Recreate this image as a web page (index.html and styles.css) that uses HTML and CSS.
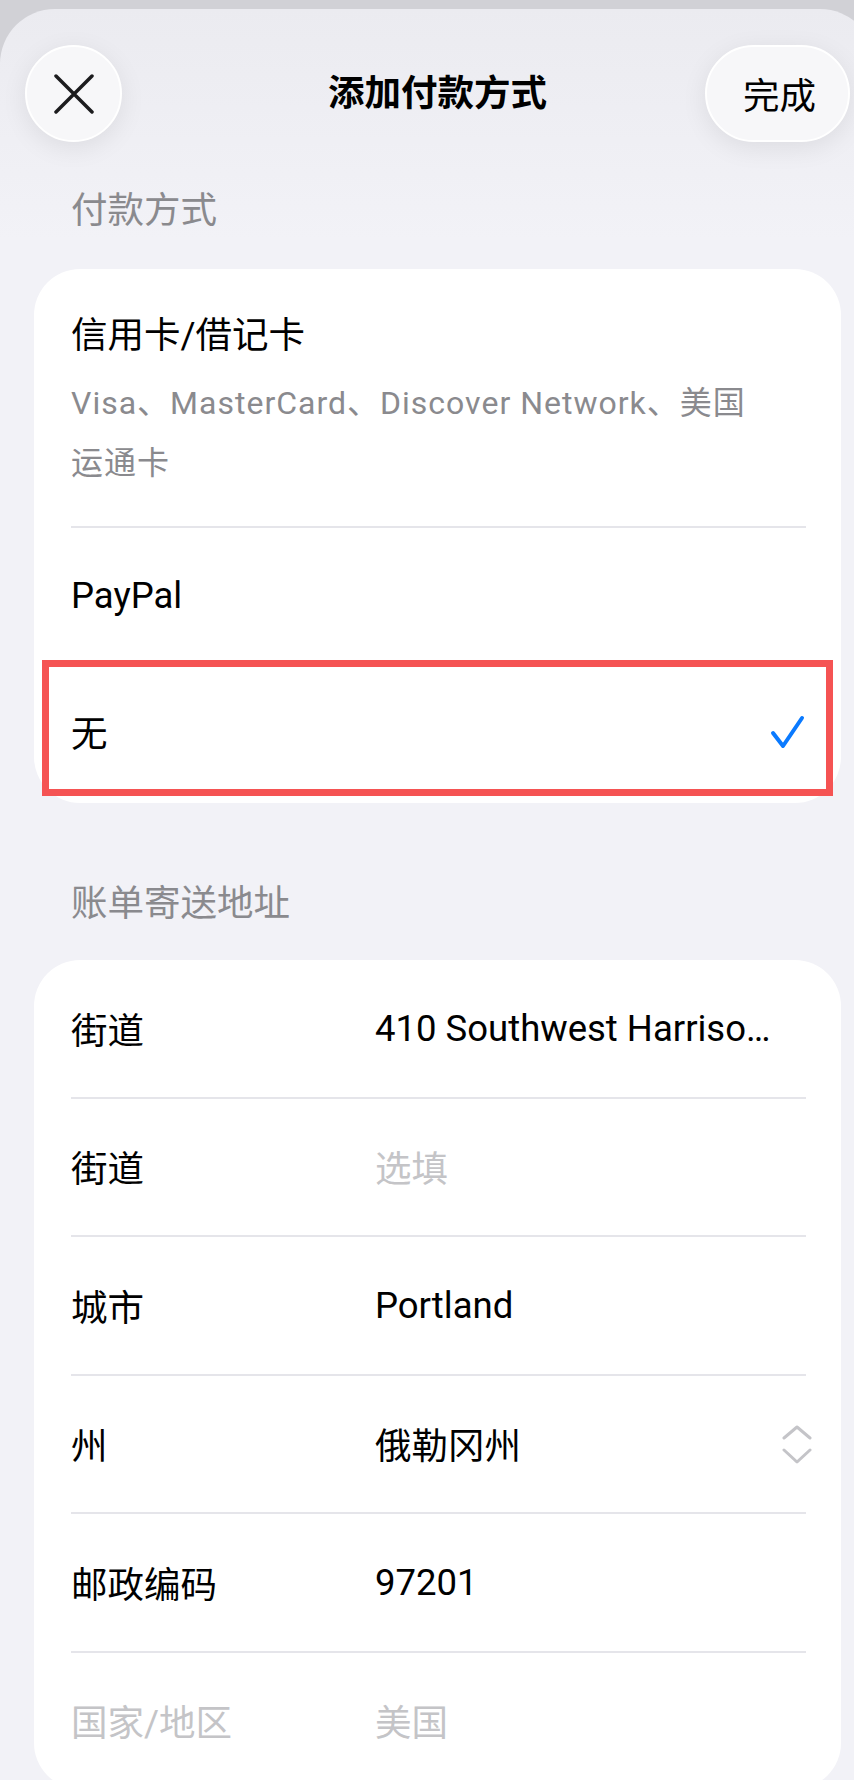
FILE: index.html
```html
<!DOCTYPE html>
<html lang="zh-CN">
<head>
<meta charset="utf-8">
<meta name="viewport" content="width=device-width, initial-scale=1.0">
<title>添加付款方式</title>
<link rel="stylesheet" href="styles.css">
</head>
<body>
<div class="screen">
	<div class="status-mark"></div>
	<div class="sheet">
		<div class="nav">
			<button class="circle-btn" aria-label="关闭">
				<svg width="40" height="40" viewBox="0 0 40 40"><path d="M2 2 L38 38 M38 2 L2 38"/></svg>
			</button>
			<h1 class="nav-title">添加付款方式</h1>
			<button class="pill-btn">完成</button>
		</div>

		<h2 class="group-title">付款方式</h2>
		<div class="group">
			<div class="row row-tall">
				<div class="opt-name">信用卡/借记卡</div>
				<div class="opt-sub">Visa、MasterCard、Discover Network、美国<br>运通卡</div>
			</div>
			<div class="row"><span class="opt-name">PayPal</span></div>
			<div class="row">
				<span class="opt-name">无</span>
				<svg class="check" width="36" height="36" viewBox="0 0 36 36"><path d="M3 16 L13 29 L32 1"/></svg>
				<div class="mark-box"></div>
			</div>
		</div>

		<h2 class="group-title">账单寄送地址</h2>
		<div class="group">
			<div class="row"><span class="label">街道</span><span class="value">410 Southwest Harrison Street</span></div>
			<div class="row"><span class="label">街道</span><span class="value placeholder">选填</span></div>
			<div class="row"><span class="label">城市</span><span class="value">Portland</span></div>
			<div class="row">
				<span class="label">州</span><span class="value">俄勒冈州</span>
				<svg class="updown" width="32" height="40" viewBox="0 0 32 40"><path d="M3 14 L16 3 L29 14 M3 26 L16 38 L29 26"/></svg>
			</div>
			<div class="row"><span class="label">邮政编码</span><span class="value">97201</span></div>
			<div class="row disabled"><span class="label">国家/地区</span><span class="value">美国</span></div>
		</div>
	</div>
</div>
</body>
</html>
```

FILE: styles.css
```css
* {
	box-sizing: border-box;
}
body {
	margin: 0;
	width: 854px;
	overflow: hidden;
	background: #d1d1d6;
	font-family: Roboto, "Noto Sans CJK SC", sans-serif;
	color: #000;
}
.screen {
	width: 875px;
	position: relative;
}
.status-mark {
	position: absolute;
	left: 37px;
	top: 3px;
	width: 6px;
	height: 17px;
	background: #000;
}
.status-mark:after {
	content: "";
	position: absolute;
	left: -9px;
	top: 11px;
	width: 15px;
	height: 5px;
	background: #000;
}
.sheet {
	position: relative;
	z-index: 1;
	margin-top: 9px;
	padding-bottom: 40px;
	border-radius: 55px 55px 0 0;
	background: linear-gradient(#ebebf0, #f2f2f7 230px);
}

/* top bar */
.nav {
	display: grid;
	grid-template-columns: 1fr auto 1fr;
	align-items: center;
	padding: 36px 25px 0;
}
.circle-btn, .pill-btn {
	height: 97px;
	border: 2px solid #fff;
	background: #f7f7f9;
	box-shadow: 0 6px 26px rgba(0, 0, 0, 0.08);
	font-family: inherit;
	color: #000;
}
.circle-btn {
	justify-self: start;
	width: 97px;
	border-radius: 50%;
	display: flex;
	align-items: center;
	justify-content: center;
	padding: 0;
}
.circle-btn svg path {
	fill: none;
	stroke: #1c1c1e;
	stroke-width: 3.5;
	stroke-linecap: round;
}
.pill-btn {
	justify-self: end;
	width: 145px;
	border-radius: 49px;
	font-size: 36.5px;
	padding: 0 0 0 4px;
}
.nav-title {
	margin: 0;
	font-size: 36.5px;
	font-weight: 600;
	line-height: 44px;
}

/* groups */
.group-title {
	margin: 47px 71px 36px;
	font-size: 36.5px;
	font-weight: 400;
	line-height: 44px;
	color: #8a8a8e;
}
.group + .group-title {
	margin-bottom: 34px;
}
.group {
	margin: 0 34px 79px;
	background: #fff;
	border-radius: 46px;
}
.row {
	position: relative;
	display: flex;
	align-items: center;
	min-height: 138.5px;
	margin: 0 35px 0 37px;
	border-top: 2px solid #e5e5ea;
	font-size: 36.5px;
}
.row:first-child {
	min-height: 136.5px;
	border-top: 0;
}
.row-tall {
	display: block;
	padding: 45px 0 33px;
}
.opt-name {
	line-height: 44px;
}
.opt-sub {
	margin-top: 15px;
	font-size: 32px;
	line-height: 60px;
	letter-spacing: 1px;
	color: #8a8a8e;
}
.check {
	margin-left: auto;
	overflow: visible;
}
.check path {
	fill: none;
	stroke: #0a7aff;
	stroke-width: 4;
	stroke-linecap: round;
	stroke-linejoin: round;
}
.mark-box {
	position: absolute;
	left: -29px;
	top: -7px;
	width: 791px;
	height: 136px;
	border: 7px solid #f55353;
}

/* address fields */
.label {
	flex: 0 0 304px;
}
.value {
	flex: 1;
	min-width: 0;
	padding-right: 16px;
	white-space: nowrap;
	overflow: hidden;
	text-overflow: ellipsis;
}
.placeholder, .disabled {
	color: #c4c4c7;
}
.updown {
	margin-right: -7px;
	flex: none;
}
.updown path {
	fill: none;
	stroke: #c4c4c8;
	stroke-width: 3;
	stroke-linecap: round;
	stroke-linejoin: round;
}
```
